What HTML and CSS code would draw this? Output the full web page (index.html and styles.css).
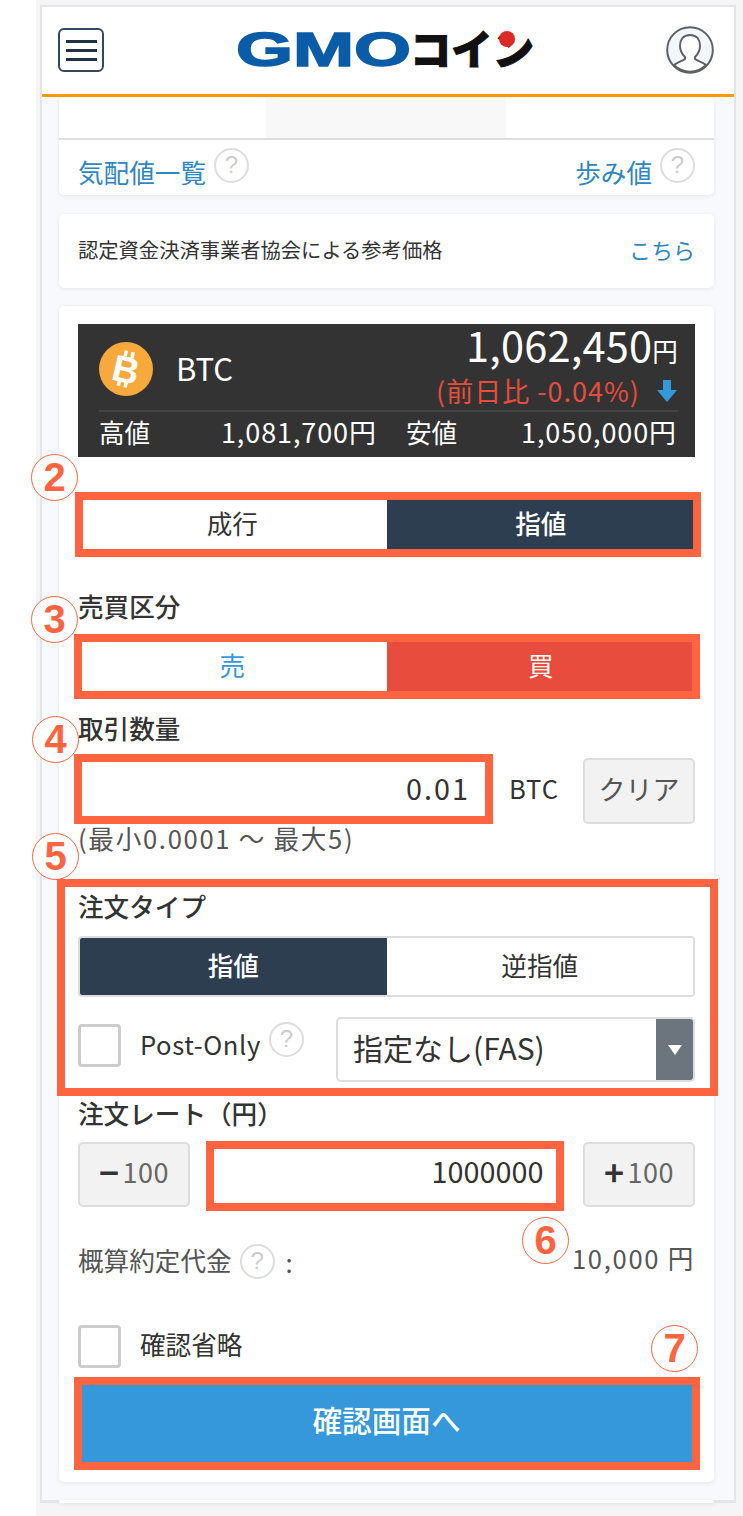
FILE: index.html
```html
<!DOCTYPE html>
<html lang="ja">
<head>
  <meta charset="UTF-8" />
  <meta name="viewport" content="width=device-width, initial-scale=1.0"/>
  <title>GMOコイン 注文</title>
  <link rel="stylesheet" href="styles.css">
</head>
<body>
  <div class="screen">
    <div class="frame">
      <header class="header">
        <div class="menu-btn"><span></span><span></span><span></span></div>
        <svg class="logo" width="304" height="68" viewBox="-4 -15 304 68">
          <text class="logo-gmo" x="-2" y="35" textLength="175" lengthAdjust="spacingAndGlyphs">GMO</text>
          <text class="logo-coin" x="172" y="33.5" textLength="124" lengthAdjust="spacingAndGlyphs">コイン</text>
          <circle cx="269" cy="8" r="8" fill="#dd2a24"/>
        </svg>
        <svg class="user-icon" width="48" height="48" viewBox="0 0 48 48">
          <circle cx="24" cy="24" r="22.8" fill="#f3f7fb" stroke="#5c6168" stroke-width="2"/>
          <path d="M24 9C17 9 14 14 14 20C14 25 16 28 19 31V33C15 36 11 36 8 39A22.5 22.5 0 0 0 40 39C37 36 33 36 29 33V31C32 28 34 25 34 20C34 14 31 9 24 9Z" fill="#fff" stroke="#5c6168" stroke-width="2"/>
        </svg>
      </header>

      <main class="main">
        <section class="card board">
          <div class="board-tabs"><div></div><div class="mid"></div><div></div></div>
          <div class="board-links">
            <div class="link-item"><a>気配値一覧</a><span class="help up">?</span></div>
            <div class="link-item"><a>歩み値</a><span class="help up">?</span></div>
          </div>
        </section>

        <section class="card ref-price">
          <span>認定資金決済事業者協会による参考価格</span>
          <a>こちら</a>
        </section>

        <section class="card order">
          <div class="ticker">
            <div class="ticker-top">
              <svg class="btc-icon" width="54" height="54" viewBox="0 0 54 54">
                <circle cx="27" cy="27" r="27" fill="#f7a93c"/>
                <g fill="#fff" transform="rotate(13 27 27)">
                  <rect x="21.5" y="9" width="3.5" height="6"/>
                  <rect x="28.5" y="9" width="3.5" height="6"/>
                  <rect x="21.5" y="39" width="3.5" height="6"/>
                  <rect x="28.5" y="39" width="3.5" height="6"/>
                  <text class="btc-b" x="27" y="40.5" text-anchor="middle">B</text>
                </g>
              </svg>
              <div class="btc-name">BTC</div>
              <div class="price-box">
                <div class="price">1,062,450<small>円</small></div>
                <div class="change">(前日比 -0.04%)
                  <svg width="22" height="22" viewBox="0 0 22 22"><path d="M7 0H15V10H21L11 22L1 10H7Z" fill="#3498db"/></svg>
                </div>
              </div>
            </div>
            <div class="ticker-bottom">
              <span>高値</span><span class="val val-high">1,081,700円</span>
              <span class="low">安値</span><span class="val val-low">1,050,000円</span>
            </div>
          </div>

          <div class="seg seg-market">
            <div class="seg-item">成行</div>
            <div class="seg-item navy">指値</div>
            <div class="mark mark-2"></div>
          </div>

          <div class="label label-side">売買区分</div>
          <div class="seg seg-side">
            <div class="seg-item sell">売</div>
            <div class="seg-item buy">買</div>
            <div class="mark mark-3"></div>
          </div>

          <div class="label label-qty">取引数量</div>
          <div class="qty-row">
            <div class="input-wrap qty-input">
              <input type="text" class="num-input qty-value" value="0.01" />
              <div class="mark mark-4"></div>
            </div>
            <span class="unit">BTC</span>
            <button type="button" class="gray-btn clear-btn">クリア</button>
          </div>
          <div class="hint">(最小0.0001 ～ 最大5)</div>

          <div class="order-type">
            <div class="label">注文タイプ</div>
            <div class="seg seg-type">
              <div class="seg-item navy">指値</div>
              <div class="seg-item">逆指値</div>
            </div>
            <div class="type-row">
              <input type="checkbox" class="check" />
              <span class="check-text">Post-Only</span>
              <span class="help post-help">?</span>
              <div class="select">
                <span>指定なし(FAS)</span>
                <div class="select-arrow"></div>
              </div>
            </div>
            <div class="mark mark-5"></div>
          </div>

          <div class="label label-rate">注文レート（円）</div>
          <div class="rate-row">
            <button type="button" class="gray-btn step-btn"><b>−</b>100</button>
            <div class="input-wrap rate-input">
              <input type="text" class="num-input" value="1000000" />
              <div class="mark mark-6"></div>
            </div>
            <button type="button" class="gray-btn step-btn"><b>+</b>100</button>
          </div>

          <div class="estimate">
            <div class="estimate-left"><span class="estimate-text">概算約定代金</span><span class="help">?</span><span class="colon">:</span></div>
            <div class="estimate-val">10,000 円</div>
          </div>

          <div class="skip-row">
            <input type="checkbox" class="check" />
            <span class="check-text">確認省略</span>
          </div>

          <div class="submit-wrap">
            <button type="button" class="submit-btn">確認画面へ</button>
            <div class="mark mark-7"></div>
          </div>

          <!-- 注釈の丸数字 -->
          <span class="num num-2">2</span>
          <span class="num num-3">3</span>
          <span class="num num-4">4</span>
          <span class="num num-5">5</span>
          <span class="num num-6">6</span>
          <span class="num num-7">7</span>
        </section>

        <section class="card next-card"></section>
      </main>
    </div>
  </div>
</body>
</html>
```

FILE: styles.css
```css
* {
  box-sizing: border-box;
}
body {
  margin: 0;
  background-color: #fff;
  font-family: "Noto Sans CJK JP", "Noto Sans", sans-serif;
  color: #333;
}
a {
  color: #2f86c1;
}
.screen {
  margin-left: 36px;
  height: 1516px;
  padding: 5px 7px 0 4px;
  background-color: #f5f5f5;
}
.frame {
  height: 1498px;
  border: 2px solid #e3e5e8;
  border-bottom-width: 3px;
  background-color: #f7f9fc;
}

/* header */
.header {
  height: 90px;
  display: flex;
  align-items: center;
  justify-content: space-between;
  padding: 0 20px 1px 17px;
  background-color: #fff;
  border-bottom: 3px solid #ff9900;
}
.menu-btn {
  width: 46px;
  height: 44px;
  margin-left: -1px;
  border: 2px solid #34495e;
  border-radius: 6px;
  display: flex;
  flex-direction: column;
  justify-content: center;
  align-items: center;
  gap: 6px;
}
.menu-btn span {
  width: 31px;
  height: 3px;
  background-color: #1f3348;
}
.logo {
  margin-left: 1px;
}
.logo-gmo {
  font-family: "Liberation Sans", sans-serif;
  font-weight: bold;
  font-size: 48px;
  fill: #0b5ca8;
  stroke: #0b5ca8;
  stroke-width: 1.5px;
}
.logo-coin {
  font-family: "Noto Sans CJK JP", sans-serif;
  font-weight: 900;
  font-size: 41px;
  fill: #111;
  stroke: #111;
  stroke-width: 1px;
}
.btc-b {
  font-family: "Liberation Sans", sans-serif;
  font-weight: bold;
  font-size: 37px;
}

/* cards */
.main {
  padding: 0 20px 0 17px;
}
.card {
  background-color: #fff;
  border-radius: 5px;
  box-shadow: 0 1px 4px rgba(0, 0, 0, 0.08);
}
.board {
  height: 98px;
}
.board-tabs {
  height: 43px;
  display: grid;
  grid-template-columns: 207px 240px 1fr;
  border-bottom: 2px solid #ddd;
}
.board-tabs .mid {
  background-color: #f8f8f8;
}
.board-links {
  display: flex;
  justify-content: space-between;
  padding: 8px 19px 0;
}
.link-item {
  display: flex;
  align-items: flex-start;
  gap: 8px;
  font-size: 25.6px;
  line-height: 34px;
}
.link-item a {
  margin-top: 7px;
}
.help {
  width: 35px;
  height: 35px;
  flex: none;
  border: 2px solid #ddd;
  border-radius: 50%;
  color: #ccc;
  font-family: "Liberation Sans", sans-serif;
  font-size: 24px;
  line-height: 30px;
  text-align: center;
}
.ref-price {
  height: 74px;
  margin-top: 19px;
  padding: 0 19px 4px;
  display: flex;
  align-items: center;
  justify-content: space-between;
  font-size: 20.3px;
}
.ref-price a {
  font-size: 22px;
}
.order {
  position: relative;
  height: 1176px;
  margin-top: 18px;
  padding: 18px 19px;
}
.next-card {
  height: 3px;
  margin-top: 18px;
}

/* ticker */
.ticker {
  height: 133px;
  background-color: #333;
  color: #fff;
  padding: 0 17px 0 21px;
}
.ticker-top {
  height: 88px;
  display: flex;
  align-items: center;
  border-bottom: 2px solid #444;
}
.btc-icon {
  flex: none;
  margin-top: 3px;
}
.btc-name {
  margin: 0 0 0 23px;
  font-size: 31px;
}
.price-box {
  margin: -3px 0 0 auto;
  text-align: right;
  align-self: flex-start;
}
.price {
  font-size: 41.5px;
  line-height: 46px;
  letter-spacing: 0.2px;
}
.price small {
  font-size: 25.6px;
}
.change {
  display: flex;
  align-items: center;
  justify-content: flex-end;
  gap: 16px;
  height: 32px;
  color: #e74c3c;
  font-size: 27px;
  letter-spacing: 1px;
}
.change svg {
  margin-top: 2px;
}
.ticker-bottom {
  height: 43px;
  display: flex;
  align-items: center;
  padding: 0 1px 4px 0;
  font-size: 25.6px;
  white-space: nowrap;
}
.ticker-bottom .val {
  font-size: 27px;
  letter-spacing: 0.9px;
}
.val-high {
  margin-left: auto;
}
.val-low {
  margin-left: 64px;
}
.ticker-bottom .low {
  margin-left: 29px;
}

/* segment buttons */
.seg {
  position: relative;
  display: grid;
  grid-template-columns: 1fr 1fr;
  height: 55px;
}
.seg-item {
  display: flex;
  align-items: center;
  justify-content: center;
  padding-bottom: 4px;
  font-size: 25.6px;
  background-color: #fff;
}
.seg-item.navy {
  background-color: #2c3e50;
  color: #fff;
  font-weight: 500;
}
.seg-item.sell {
  color: #3498db;
}
.seg-item.buy {
  background-color: #e74c3c;
  color: #fff;
}
.seg-market {
  margin-top: 40px;
}
.seg-side {
  margin-top: 16px;
}
.seg-type {
  height: 61px;
  margin-top: 13px;
  border: 2px solid #ddd;
  border-radius: 4px;
  overflow: hidden;
}

.label {
  height: 30px;
  font-size: 25.6px;
  font-weight: 500;
  line-height: 26px;
  white-space: nowrap;
}
.label-side {
  margin-top: 41px;
}
.label-qty {
  margin-top: 21px;
}
.label-rate {
  margin-top: 18px;
}

/* inputs */
.qty-row,
.rate-row {
  display: flex;
  align-items: center;
  margin-top: 13px;
  height: 66px;
}
.rate-row {
  margin-top: 12px;
  height: 65px;
  justify-content: space-between;
}
.input-wrap {
  position: relative;
  height: 100%;
}
.qty-input {
  width: 411px;
}
.rate-input {
  width: 350px;
}
.num-input {
  width: 100%;
  height: 100%;
  border: 0;
  padding: 0 18px 8px 0;
  background-color: #fff;
  color: #333;
  font-family: inherit;
  font-size: 28.8px;
  text-align: right;
}
.qty-value {
  letter-spacing: 2px;
  padding-right: 19px;
}
.unit {
  margin-left: 20px;
  padding-bottom: 8px;
  font-size: 25.6px;
  letter-spacing: 1px;
}
.gray-btn {
  height: 100%;
  background-color: #f2f2f2;
  border: 2px solid #ddd;
  border-radius: 5px;
  color: #555;
  font-family: inherit;
  padding: 0 0 6px;
}
.clear-btn {
  width: 112px;
  margin-left: auto;
  font-size: 27px;
}
.step-btn {
  width: 112px;
  font-size: 27px;
  color: #666;
  letter-spacing: 0.5px;
}
.step-btn b {
  color: #333;
  font-size: 34px;
  line-height: 1;
  margin-right: 3px;
  vertical-align: -3px;
}
.hint {
  margin-top: 1px;
  height: 30px;
  font-size: 25.6px;
  letter-spacing: 1.7px;
  line-height: 26px;
  color: #555;
}

/* order type */
.order-type {
  position: relative;
  margin-top: 38px;
}
.type-row {
  display: flex;
  align-items: center;
  height: 65px;
  margin-top: 20px;
}
.type-row .check {
  align-self: flex-start;
  margin-top: 7px;
}
.check {
  appearance: none;
  width: 43px;
  height: 43px;
  margin: 0;
  flex: none;
  background-color: #fff;
  border: 3px solid #ccc;
  border-radius: 4px;
}
.check-text {
  margin-left: 19px;
  padding-bottom: 6px;
  font-size: 25.6px;
}
.type-row .check-text {
  padding-bottom: 12px;
  letter-spacing: 0.6px;
}
.post-help {
  margin: -20px 0 0 8px;
}
.select {
  position: relative;
  margin-left: auto;
  width: 359px;
  height: 65px;
  padding: 0 0 6px 15px;
  display: flex;
  align-items: center;
  background-color: #fff;
  border: 2px solid #ddd;
  border-radius: 5px;
  font-size: 30px;
  overflow: hidden;
}
.select-arrow {
  position: absolute;
  top: 0;
  right: 0;
  bottom: 0;
  width: 37px;
  background-color: #6c757d;
}
.select-arrow::after {
  content: "";
  position: absolute;
  left: 12px;
  top: 26px;
  border-top: 10px solid #fff;
  border-left: 7px solid transparent;
  border-right: 7px solid transparent;
}

/* bottom */
.estimate {
  display: flex;
  justify-content: space-between;
  align-items: center;
  height: 35px;
  margin-top: 37px;
  font-size: 25.6px;
  color: #555;
}
.estimate-left {
  display: flex;
  align-items: center;
  gap: 8px;
}
.estimate-text {
  padding-bottom: 4px;
}
.colon {
  margin-left: 3px;
}
.estimate-val {
  margin-top: -8px;
  letter-spacing: 1.7px;
}
.skip-row {
  display: flex;
  align-items: center;
  margin-top: 46px;
}
.submit-wrap {
  position: relative;
  margin-top: 14px;
}
.submit-btn {
  display: block;
  width: 100%;
  height: 83px;
  border: 0;
  padding: 0 0 8px;
  background-color: #3498db;
  color: #fff;
  font-family: inherit;
  font-size: 29.6px;
  font-weight: 500;
}

/* 注釈の赤枠 */
.mark {
  position: absolute;
  border: 8px solid #ff6441;
  pointer-events: none;
}
.mark-2 {
  top: -5px;
  bottom: -5px;
  left: -3px;
  right: -6px;
}
.mark-3 {
  top: -5px;
  bottom: -5px;
  left: -4px;
  right: -5px;
}
.mark-4 {
  top: -4px;
  bottom: 0;
  left: -4px;
  right: -4px;
}
.mark-5 {
  top: -14px;
  bottom: -14px;
  left: -21px;
  right: -23px;
}
.mark-6 {
  top: -1px;
  bottom: -4px;
  left: -6px;
  right: -2px;
}
.mark-7 {
  top: -5px;
  bottom: -5px;
  left: -4px;
  right: -5px;
}

/* 丸数字 */
.num {
  position: absolute;
  width: 47px;
  height: 47px;
  border: 1.5px solid #ff6441;
  border-radius: 50%;
  background-color: #fff;
  color: #ff6441;
  font-family: "Liberation Sans", sans-serif;
  font-size: 40px;
  font-weight: bold;
  line-height: 44px;
  text-align: center;
}
.num-2 {
  left: -28px;
  top: 148px;
}
.num-3 {
  left: -28px;
  top: 290px;
}
.num-4 {
  left: -27px;
  top: 410px;
}
.num-5 {
  left: -27px;
  top: 527px;
}
.num-6 {
  left: 463px;
  top: 911px;
}
.num-7 {
  left: 592px;
  top: 1019px;
}
```
